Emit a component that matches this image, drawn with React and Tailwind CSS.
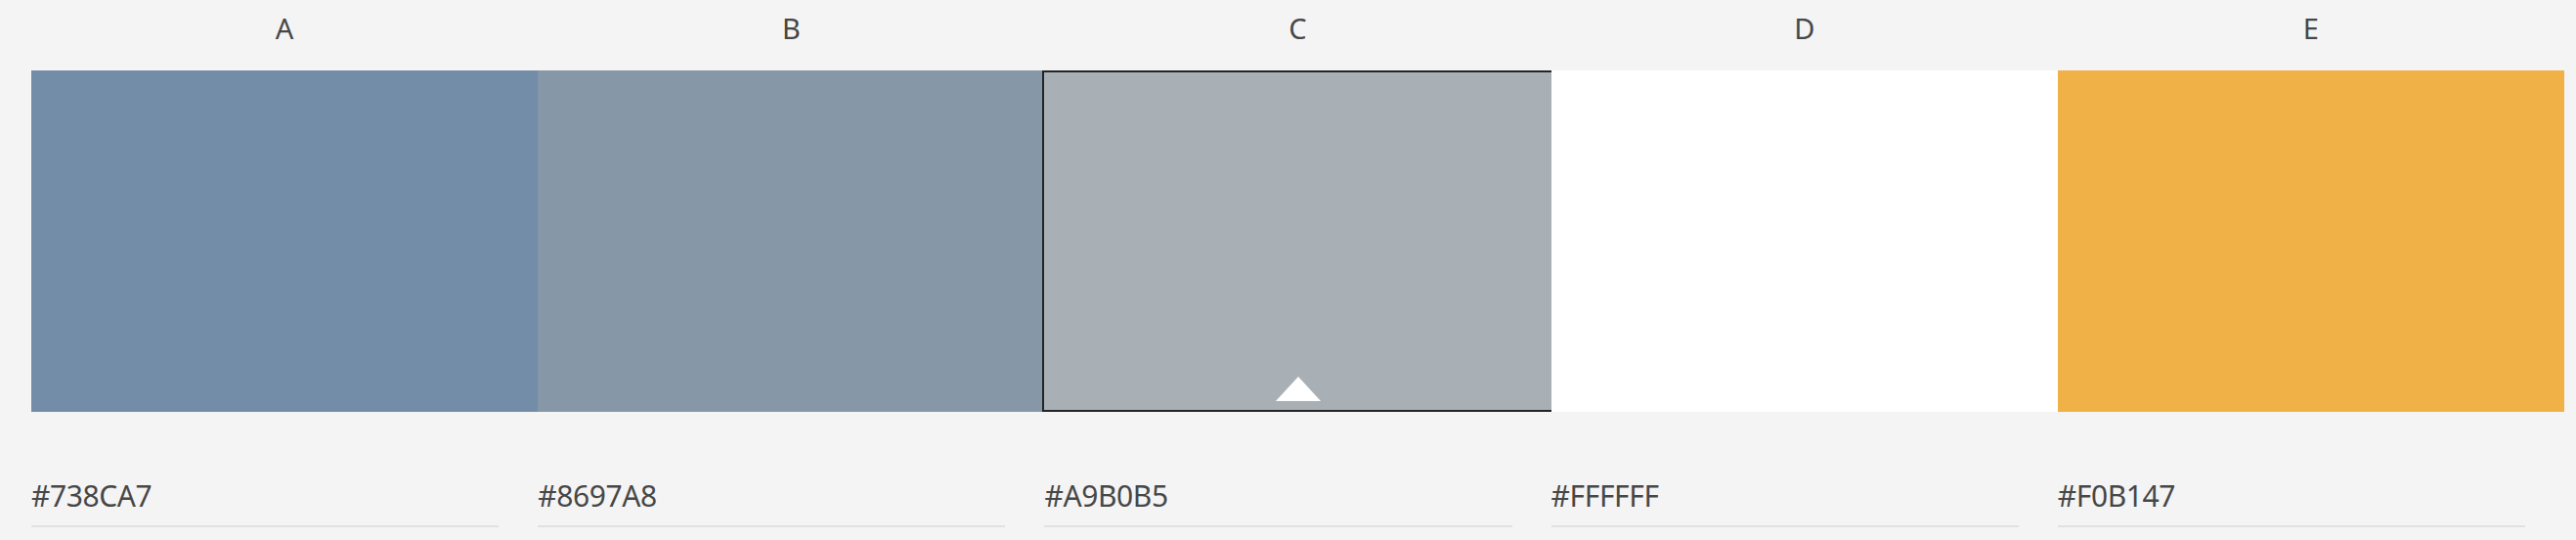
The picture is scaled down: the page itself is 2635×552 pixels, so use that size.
import React from "react";

const swatches = [
  { label: "A", hex: "#738CA7", bg: "bg-[#738ca7]" },
  { label: "B", hex: "#8697A8", bg: "bg-[#8697a8]" },
  { label: "C", hex: "#A9B0B5", bg: "bg-[#a9b0b5]", active: true },
  { label: "D", hex: "#FFFFFF", bg: "bg-[#ffffff]" },
  { label: "E", hex: "#F0B147", bg: "bg-[#f0b147]" },
];

export default function App() {
  return (
    <div
      className="w-[2635px] h-[552px] bg-[#f4f4f4] pl-[32px] pr-[12px] text-[#474747] overflow-hidden"
      style={{ fontFamily: '"Noto Sans", "Open Sans", sans-serif' }}
    >
      <div className="flex">
        {swatches.map((s) => (
          <div key={s.label} className="flex-1 flex flex-col">
            <div className="h-[72px] flex items-center justify-center text-[29px] leading-none pb-[16px]">
              {s.label}
            </div>
            <div className={`relative h-[349px] ${s.bg}`}>
              {s.active && (
                <>
                  <div className="absolute -left-[2px] -right-[2px] inset-y-0 border-2 border-[#222426]" />
                  <div className="absolute left-1/2 -translate-x-1/2 bottom-[11px] w-0 h-0 border-l-[23px] border-r-[23px] border-b-[25px] border-l-transparent border-r-transparent border-b-white" />
                </>
              )}
            </div>
            <div className="mr-[40px] mt-[64px] border-b-2 border-[#e1e1e1] pb-[8px] text-[30px] tracking-[-0.4px] leading-[44px]">
              {s.hex}
            </div>
          </div>
        ))}
      </div>
    </div>
  );
}
